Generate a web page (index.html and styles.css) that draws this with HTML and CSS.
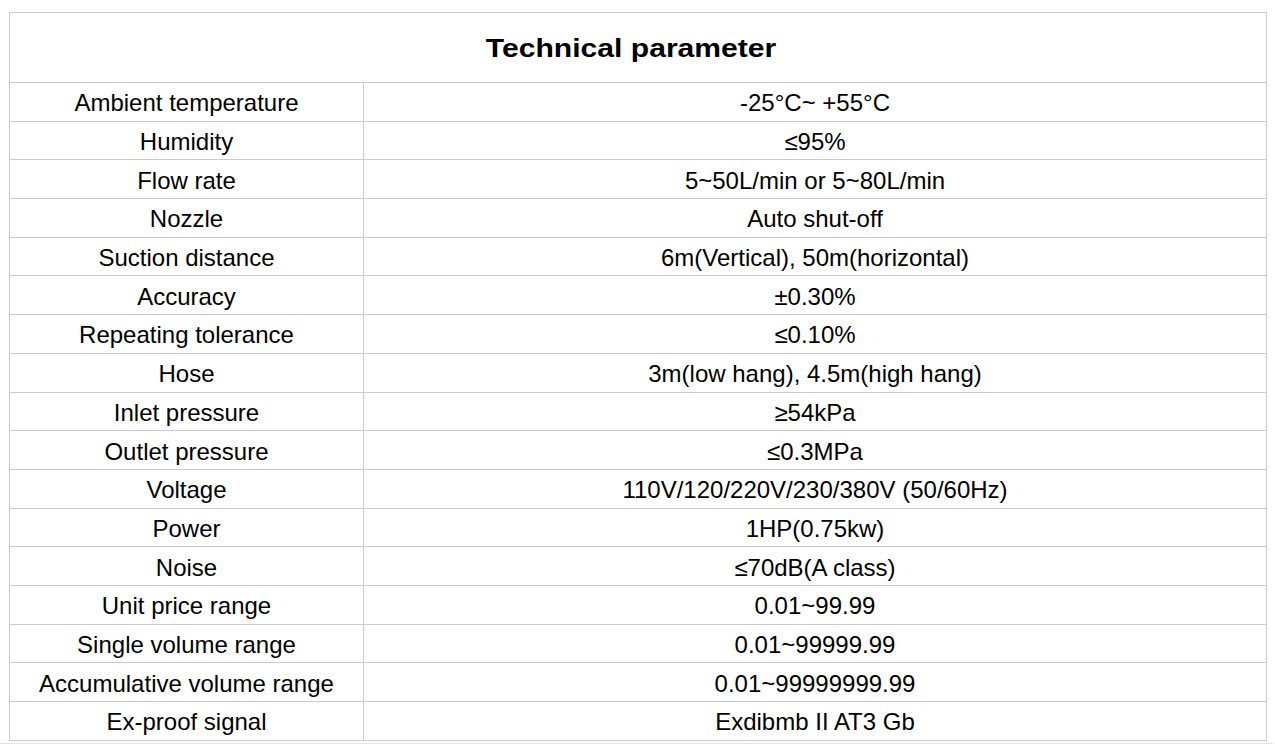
FILE: index.html
```html
<!DOCTYPE html>
<html>
<head>
<meta charset="utf-8">
<link rel="stylesheet" href="styles.css">
</head>
<body>
<div class="page">
<table class="spec">
<colgroup><col class="c1"><col class="c2"></colgroup>
<thead>
<tr class="title-row"><th colspan="2"><span class="title">Technical parameter</span></th></tr>
</thead>
<tbody>
<tr><td>Ambient temperature</td><td>-25°C~ +55°C</td></tr>
<tr><td>Humidity</td><td>≤95%</td></tr>
<tr><td>Flow rate</td><td>5~50L/min or 5~80L/min</td></tr>
<tr><td>Nozzle</td><td>Auto shut-off</td></tr>
<tr><td>Suction distance</td><td>6m(Vertical), 50m(horizontal)</td></tr>
<tr><td>Accuracy</td><td>±0.30%</td></tr>
<tr><td>Repeating tolerance</td><td>≤0.10%</td></tr>
<tr><td>Hose</td><td>3m(low hang), 4.5m(high hang)</td></tr>
<tr><td>Inlet pressure</td><td>≥54kPa</td></tr>
<tr><td>Outlet pressure</td><td>≤0.3MPa</td></tr>
<tr><td>Voltage</td><td>110V/120/220V/230/380V (50/60Hz)</td></tr>
<tr><td>Power</td><td>1HP(0.75kw)</td></tr>
<tr><td>Noise</td><td>≤70dB(A class)</td></tr>
<tr><td>Unit price range</td><td>0.01~99.99</td></tr>
<tr><td>Single volume range</td><td>0.01~99999.99</td></tr>
<tr><td>Accumulative volume range</td><td>0.01~99999999.99</td></tr>
<tr><td>Ex-proof signal</td><td>Exdibmb II AT3 Gb</td></tr>
</tbody>
</table>
</div>
<div class="rule"></div>
</body>
</html>
```
FILE: styles.css
```css
html, body {
  margin: 0;
  padding: 0;
  background: #fff;
}
body {
  font-family: "Liberation Sans", Arial, sans-serif;
  color: #000;
}
.page {
  padding: 12px 0 0 9px;
  height: 731px;
  box-sizing: border-box;
}
.spec {
  border-collapse: collapse;
  width: 1258px;
  table-layout: fixed;
}
.c1 { width: 354px; }
.spec th, .spec td {
  border: 1px solid #cccccc;
  text-align: center;
  vertical-align: middle;
  line-height: 1;
}
.title-row th {
  height: 67px;
  padding: 2px 14px 0 0;
  font-size: 25.5px;
  font-weight: bold;
}
.title {
  display: inline-block;
  transform: scaleX(1.18);
}
.spec td {
  height: 34.7px;
  padding: 3px 0 0 0;
  font-size: 24px;
}
.rule {
  margin-top: 12px;
  width: 1273px;
  border-top: 1px solid #e3e3e3;
}
```
